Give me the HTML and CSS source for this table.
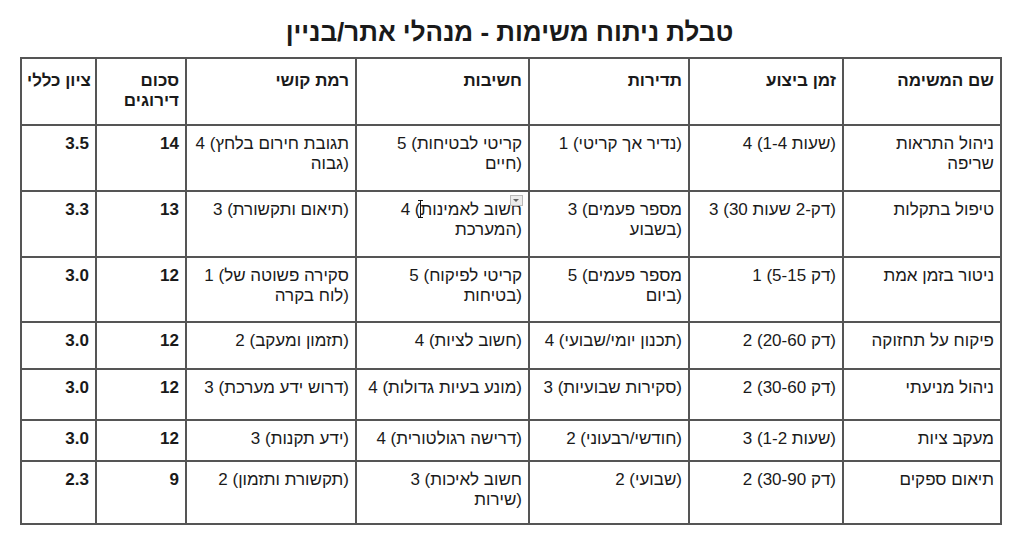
FILE: index.html
```html
<!DOCTYPE html>
<html lang="he">
<head>
<meta charset="utf-8">
<title>טבלת ניתוח משימות</title>
<link rel="stylesheet" href="styles.css">
</head>
<body>
<main class="page">
  <h1 class="title">טבלת ניתוח משימות - מנהלי אתר/בניין</h1>
  <table class="grid">
    <colgroup>
      <col class="c-name"><col class="c-time"><col class="c-freq"><col class="c-imp"><col class="c-diff"><col class="c-sum"><col class="c-score">
    </colgroup>
    <thead>
      <tr class="r-head">
        <th>שם המשימה</th><th>זמן ביצוע</th><th>תדירות</th><th>חשיבות</th><th>רמת קושי</th><th>סכום<br>דירוגים</th><th>ציון כללי</th>
      </tr>
    </thead>
    <tbody>
      <tr class="r-66">
        <td>ניהול התראות<br>שריפה</td><td>4 (1-4 שעות)</td><td>1 (נדיר אך קריטי)</td><td>5 (קריטי לבטיחות<br>חיים)</td><td>4 (תגובת חירום בלחץ<br>גבוה)</td><td class="num">14</td><td class="num">3.5</td>
      </tr>
      <tr class="r-66">
        <td>טיפול בתקלות</td><td>3 (30 דק-2 שעות)</td><td>3 (מספר פעמים<br>בשבוע)</td><td class="edit"><div class="cell-wrap">4 (חשוב לאמינות<br>המערכת)<span class="drop"></span><span class="caret"></span></div></td><td>3 (תיאום ותקשורת)</td><td class="num">13</td><td class="num">3.3</td>
      </tr>
      <tr class="r-65">
        <td>ניטור בזמן אמת</td><td>1 (5-15 דק)</td><td>5 (מספר פעמים<br>ביום)</td><td>5 (קריטי לפיקוח<br>בטיחות)</td><td>1 (סקירה פשוטה של<br>לוח בקרה)</td><td class="num">12</td><td class="num">3.0</td>
      </tr>
      <tr class="r-47">
        <td>פיקוח על תחזוקה</td><td>2 (20-60 דק)</td><td>4 (תכנון יומי/שבועי)</td><td>4 (חשוב לציות)</td><td>2 (תזמון ומעקב)</td><td class="num">12</td><td class="num">3.0</td>
      </tr>
      <tr class="r-51">
        <td>ניהול מניעתי</td><td>2 (30-60 דק)</td><td>3 (סקירות שבועיות)</td><td>4 (מונע בעיות גדולות)</td><td>3 (דרוש ידע מערכת)</td><td class="num">12</td><td class="num">3.0</td>
      </tr>
      <tr class="r-41">
        <td>מעקב ציות</td><td>3 (1-2 שעות)</td><td>2 (חודשי/רבעוני)</td><td>4 (דרישה רגולטורית)</td><td>3 (ידע תקנות)</td><td class="num">12</td><td class="num">3.0</td>
      </tr>
      <tr class="r-63">
        <td>תיאום ספקים</td><td>2 (30-90 דק)</td><td>2 (שבועי)</td><td>3 (חשוב לאיכות<br>שירות)</td><td>2 (תקשורת ותזמון)</td><td class="num">9</td><td class="num">2.3</td>
      </tr>
    </tbody>
  </table>
</main>
</body>
</html>
```
FILE: styles.css
```css
html, body {
  margin: 0;
  padding: 0;
  background: #ffffff;
}

.page {
  width: 1019px;
  padding: 18px 0 0 20px;
  box-sizing: border-box;
  font-family: "Liberation Sans", Arial, sans-serif;
  color: #1a1a1a;
}

.title {
  margin: 0 20px 10px 0;
  font-size: 26px;
  line-height: 29px;
  font-weight: bold;
  text-align: center;
  direction: rtl;
}

.grid {
  direction: rtl;
  border-collapse: collapse;
  table-layout: fixed;
  width: 980px;
  font-size: 17px;
  line-height: 20px;
}

.c-name { width: 158px; }
.c-time { width: 154px; }
.c-freq { width: 160px; }
.c-imp { width: 173px; }
.c-diff { width: 170px; }
.c-sum { width: 90px; }
.c-score { width: 75px; }

.grid th,
.grid td {
  border: 2px solid #555;
  padding: 8px 6px 6px 5px;
  vertical-align: top;
  direction: ltr;
  text-align: right;
  font-weight: normal;
  white-space: nowrap;
}

.grid th {
  font-weight: bold;
  padding-top: 12px;
}

.grid td.num {
  font-weight: bold;
}

.r-head { height: 67px; }
.r-66 { height: 66px; }
.r-65 { height: 65px; }
.r-47 { height: 47px; }
.r-51 { height: 51px; }
.r-41 { height: 41px; }
.r-63 { height: 63px; }

.cell-wrap {
  position: relative;
}

.drop {
  position: absolute;
  top: -5px;
  right: -1px;
  width: 13px;
  height: 11px;
  background: #ececec;
  border: 1px solid #b9b9b9;
  box-sizing: border-box;
}

.drop::after {
  content: "";
  position: absolute;
  left: 2px;
  top: 3px;
  border-left: 3.5px solid transparent;
  border-right: 3.5px solid transparent;
  border-top: 3.5px solid #666;
}

.caret {
  position: absolute;
  top: 0;
  right: 101px;
  width: 1px;
  height: 18px;
  background: #111;
}

.caret::before,
.caret::after {
  content: "";
  position: absolute;
  left: -2px;
  width: 5px;
  height: 1px;
  background: #111;
}

.caret::before { top: 0; }
.caret::after { bottom: 0; }
```
